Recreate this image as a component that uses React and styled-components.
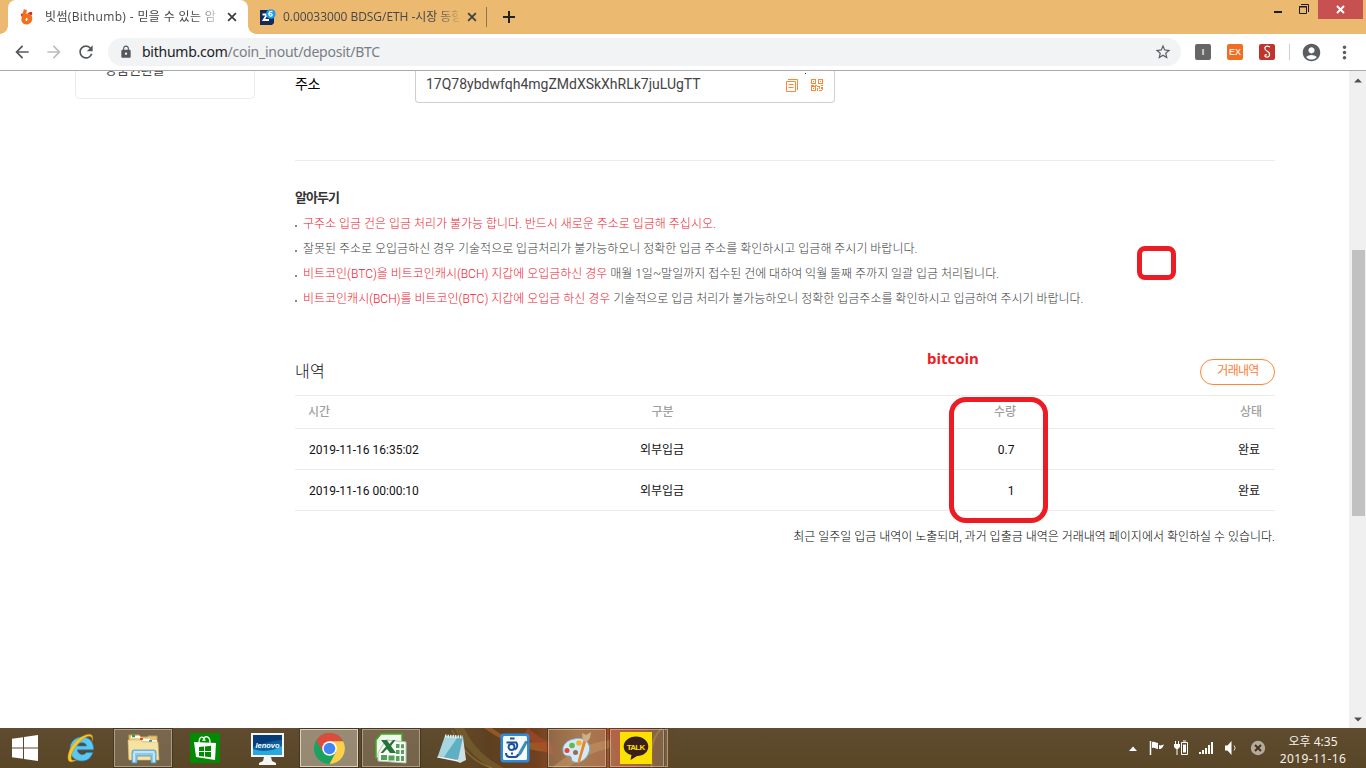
import React from "react";
import styled, { createGlobalStyle, css } from "styled-components";
import { MdArrowBack, MdArrowForward, MdRefresh, MdLock, MdStarBorder, MdAccountCircle, MdMoreVert } from "react-icons/md";

const GlobalStyle = createGlobalStyle`
  * { box-sizing: border-box; }
  body { margin: 0; overflow: hidden; }
  svg { display: block; flex: none; }
`;

const uiFont = `"Noto Sans", "Noto Sans CJK KR", sans-serif`;
const pageFont = `Roboto, "Noto Sans CJK KR", sans-serif`;

const Screen = styled.div`
  position: relative;
  width: 1366px;
  height: 768px;
  display: flex;
  flex-direction: column;
  overflow: hidden;
  background: #fff;
  font-family: ${pageFont};
`;

/* ---------- window frame ---------- */
const TabStrip = styled.header`
  height: 34px;
  flex: none;
  display: flex;
  align-items: flex-start;
  padding-left: 8px;
  background: #ebba70;
  font-family: "Open Sans", "Noto Sans CJK KR", sans-serif;
`;
const Tab = styled.div`
  position: relative;
  width: 240px;
  height: 34px;
  padding: 0 11px 0 12px;
  display: flex;
  align-items: center;
  font-size: 12px;
  font-weight: 400;
  color: #45474b;
  ${(p) =>
    p.$active &&
    css`
      background: #fff;
      border-radius: 8px 8px 0 0;
      &::before,
      &::after {
        content: "";
        position: absolute;
        bottom: 0;
        width: 8px;
        height: 8px;
      }
      &::before {
        left: -8px;
        background: radial-gradient(circle at 0 0, transparent 7.5px, #fff 8px);
      }
      &::after {
        right: -8px;
        background: radial-gradient(circle at 100% 0, transparent 7.5px, #fff 8px);
      }
    `}
`;
const TabTitle = styled.span`
  flex: 1;
  margin-left: ${(p) => p.$gap}px;
  margin-right: 8px;
  line-height: 20px;
  white-space: nowrap;
  overflow: hidden;
  letter-spacing: ${(p) => p.$spacing}px;
  mask-image: linear-gradient(to right, #000 86%, transparent 103%);
`;
const TabDivider = styled.i`
  width: 1px;
  height: 20px;
  margin: 7px 16px 0 -2px;
  background: #8b7450;
`;
const NewTab = styled.div`
  height: 34px;
  display: flex;
  align-items: center;
`;
const WindowControls = styled.div`
  margin-left: auto;
  margin-right: 3px;
  display: flex;
  align-items: flex-start;
`;
const CloseButton = styled.div`
  width: 45px;
  height: 19px;
  margin-left: 9px;
  display: flex;
  align-items: center;
  justify-content: center;
  background: #c75050;
`;

const Toolbar = styled.div`
  height: 37px;
  flex: none;
  display: flex;
  align-items: center;
  padding: 0 11px 0 12px;
  border-bottom: 1px solid #a9a9ab;
  background: #fff;
  color: #5a5e63;
`;
const NavButton = styled.span`
  width: 32px;
  display: flex;
  color: ${(p) => (p.$disabled ? "#bbbdc0" : "#54585d")};
`;
const Omnibox = styled.div`
  width: 1073px;
  height: 28px;
  margin-right: 14px;
  border-radius: 14px;
  padding: 0 9px 0 11px;
  display: flex;
  align-items: center;
  background: #f1f3f4;
  font: 14px/20px ${uiFont};
`;
const Url = styled.span`
  flex: 1;
  margin-left: 9px;
  color: #7a7e83;
  white-space: nowrap;
  letter-spacing: -0.25px;
  b { color: #202124; font-weight: 400; }
`;
const Extension = styled.span`
  width: 16px;
  height: 16px;
  margin-right: 16px;
  border-radius: 2px;
  display: flex;
  align-items: center;
  justify-content: center;
  background: ${(p) => p.$bg};
  color: #f3e7df;
  font: 700 9px/16px "Liberation Sans", sans-serif;
`;
const ToolbarDivider = styled.i`
  width: 1px;
  height: 16px;
  margin: 0 11px 0 -2px;
  background: #cdcfd1;
`;
const MenuDots = styled.span`
  margin-left: 12px;
`;

/* ---------- web page ---------- */
const Viewport = styled.main`
  flex: 1;
  min-height: 0;
  display: flex;
  overflow: hidden;
`;
const Page = styled.div`
  width: 1349px;
  padding-left: 75px;
  display: flex;
  align-items: flex-start;
`;
const SideCard = styled.aside`
  width: 180px;
  height: 28px;
  margin-right: 40px;
  padding-left: 29px;
  border: 1px solid #ebebeb;
  border-top: 0;
  border-radius: 0 0 5px 5px;
  overflow: hidden;
  font-size: 13px;
  line-height: 20px;
  color: #444;
  span { display: block; margin-top: -11px; }
`;
const Content = styled.section`
  width: 980px;
`;
const AddressRow = styled.div`
  height: 90px;
  display: flex;
  align-items: flex-start;
  border-bottom: 1px solid #ededed;
`;
const FieldLabel = styled.label`
  width: 120px;
  padding-top: 3px;
  font-size: 14px;
  line-height: 20px;
  letter-spacing: -0.3px;
  color: #000;
`;
const AddressBox = styled.div`
  width: 420px;
  height: 32px;
  padding: 0 10px 3px;
  display: flex;
  align-items: center;
  gap: 12px;
  border: 1px solid #cfcfcf;
  border-top: 0;
  border-radius: 0 0 4px 4px;
  font-size: 14px;
  color: #444;
  span { flex: 1; padding-bottom: 2px; }
`;
const NoticeTitle = styled.h4`
  margin: 26px 0 3px;
  font-size: 13px;
  line-height: 22px;
  font-weight: 700;
  letter-spacing: -1px;
  color: #333;
`;
const NoticeList = styled.ul`
  margin: 0;
  padding: 0;
  list-style: none;
`;
const NoticeItem = styled.li`
  display: flex;
  align-items: center;
  height: 25px;
  font-size: 12px;
  font-weight: 300;
  line-height: 25px;
  letter-spacing: -0.01px;
  color: #3c3c3c;
  white-space: pre;
  &::before {
    content: "";
    width: 2px;
    height: 2px;
    margin: 3px 6px 0 0;
    background: #888;
  }
  em { font-style: normal; color: #f0202f; }
`;
const HistoryHeader = styled.div`
  height: 84px;
  padding-bottom: 10px;
  display: flex;
  justify-content: space-between;
  align-items: flex-end;
  border-bottom: 1px solid #ebebeb;
`;
const HistoryTitle = styled.h3`
  margin: 0;
  font-size: 16px;
  line-height: 26px;
  font-weight: 300;
  color: #111;
  letter-spacing: 0.3px;
`;
const PillButton = styled.button`
  width: 75px;
  height: 26px;
  padding: 0 0 2px 1px;
  border: 1px solid #ff8633;
  border-radius: 13px;
  background: #fff;
  color: #ff7a2f;
  font: 12px/20px ${pageFont};
  letter-spacing: -0.7px;
`;
const Row = styled.div`
  height: ${(p) => (p.$head ? 33 : 41)}px;
  padding: ${(p) => (p.$head ? "0 13px" : "2px 15px 0 14px")};
  display: grid;
  grid-template-columns: ${(p) => (p.$head ? "232px 245px 231px 1fr" : "231px 244px 230.5px 1fr")};
  align-items: center;
  border-bottom: 1px solid #ebebeb;
  font-size: 12px;
  line-height: 18px;
  font-weight: ${(p) => (p.$head ? 500 : 400)};
  color: ${(p) => (p.$head ? "#a0a0a0" : "#111")};
`;
const Cell = styled.span`
  text-align: ${(p) => p.$align || "left"};
`;
const FootNote = styled.p`
  margin: 16px 0 0;
  text-align: right;
  font-size: 12px;
  line-height: 20px;
  font-weight: 300;
  color: #000;
`;
const ScrollTrack = styled.div`
  width: 17px;
  display: flex;
  flex-direction: column;
  align-items: center;
  padding: 7px 0 6px;
  background: #f0f0f0;
`;
const ScrollThumb = styled.div`
  width: 13px;
  height: 266px;
  margin: 167px 0 auto 2px;
  background: #c1c1c1;
`;

/* ---------- pen marks over the page ---------- */
const MarkBox = styled.div`
  position: absolute;
  left: ${(p) => p.$x}px;
  top: ${(p) => p.$y}px;
  width: ${(p) => p.$w}px;
  height: ${(p) => p.$h}px;
  border: ${(p) => p.$line}px solid #ed1c24;
  border-radius: ${(p) => p.$r}px;
`;
const MarkText = styled.div`
  position: absolute;
  left: 927px;
  top: 348px;
  font: 700 15px/20px ${uiFont};
  color: #ed1c24;
`;
const Speck = styled.i`
  position: absolute;
  left: 805px;
  top: 73px;
  width: 1px;
  height: 1px;
  background: #222;
`;

/* ---------- taskbar ---------- */
const Taskbar = styled.footer`
  position: relative;
  z-index: 0;
  height: 40px;
  flex: none;
  display: flex;
  align-items: center;
  gap: 4px;
  background: linear-gradient(#5f4b2f, #594627);
`;
const FlameArt = styled.svg`
  position: absolute;
  left: 440px;
  top: 0;
  z-index: -1;
`;
const TaskSlot = styled.div`
  width: ${(p) => p.$w || 58}px;
  height: 38px;
  padding-left: ${(p) => p.$indent || 0}px;
  padding-right: ${(p) => p.$shift || 0}px;
  display: flex;
  align-items: center;
  justify-content: center;
  ${(p) =>
    p.$open &&
    css`
      border: 1px solid rgba(222, 213, 198, ${p.$focus ? 0.95 : 0.5});
      background: rgba(225, 218, 205, ${p.$focus ? 0.45 : 0.2});
      box-shadow: 0 0 0 1px rgba(40, 28, 12, 0.4);
    `}
`;
const StackEdge = styled.i`
  width: 4px;
  height: 38px;
  margin-left: -4px;
  border: 1px solid rgba(222, 205, 180, 0.5);
  border-left: 0;
  background: rgba(225, 190, 150, 0.2);
`;
const Tray = styled.div`
  margin-left: auto;
  display: flex;
  align-items: center;
  padding-right: 20px;
`;
const TrayIcon = styled.span`
  display: flex;
  margin-right: ${(p) => p.$gap}px;
`;
const Clock = styled.div`
  width: 66px;
  padding-top: 3px;
  display: flex;
  flex-direction: column;
  align-items: center;
  white-space: nowrap;
  font: 12px/17px ${uiFont};
  color: #f5f2ec;
  div + div { letter-spacing: 0.4px; }
`;

const Cross = ({ color = "#3c4043", size = 9, w = 1.7 }) => (
  <svg width={size} height={size} viewBox="0 0 9 9">
    <path d="M1 1l7 7M8 1l-7 7" stroke={color} strokeWidth={w} />
  </svg>
);

const BithumbIcon = () => (
  <svg width="14" height="16" viewBox="0 0 14 16">
    <path d="M7.500 4.800c1.400-1.600 3.600-2.200 4.600-1.200.6.900-.1 2.400-1.300 3.500zM1 5l2.500-1-.5 5C1.400 7.600.5 6.200 1 5z" fill="#d92b26" />
    <path d="M3.800.3l3.100.6-.7 4.100C10 4.100 12.400 6.300 12.300 9.500c-.1 3.700-2.700 6-6 6-3.200 0-5.300-2.300-4.900-5.900z" fill="#f37021" />
    <ellipse cx="6.600" cy="10.500" rx=".9" ry="1.600" fill="#fff" transform="rotate(12 6.600 10.500)" />
  </svg>
);
const ExchangeIcon = () => (
  <svg width="16" height="16" viewBox="0 0 16 16">
    <path d="M0 1h10l4 6v7l-2 2H0z" fill="#182958" />
    <path d="M2.500 5.500H7L3.500 11H9" fill="none" stroke="#fff" strokeWidth="1.800" />
    <circle cx="10.800" cy="5" r="4.800" fill="#159bf0" />
    <path d="M12.500 2.600c-3-.8-4 1-3.500 3.300.5 1.900 3.300 1.500 3.200-.1-.1-1.500-2.200-1.700-3-.5" fill="none" stroke="#fff" strokeWidth="1.200" />
  </svg>
);

const CopyIcon = () => (
  <svg width="13" height="13" viewBox="0 0 13 13" fill="none" stroke="#ff8633">
    <path d="M.5 2.500h9v10h-9zM2 .5h9.500V11M2.500 5.500h5M2.500 8.500h5" />
  </svg>
);
const QrIcon = () => (
  <svg width="13" height="13" viewBox="0 0 13 13" shapeRendering="crispEdges">
    <path d="M.5 .5h4v4h-4zM7.500 .5h4v4h-4zM.5 7.500h4v4h-4z" fill="none" stroke="#ff8633" />
    <path d="M2 2h1v1H2zM9 2h1v1H9zM2 9h1v1H2zM0 6h3v1H0zM4 6h2v1H4zM6 7h3v1H6zM10 6h2v1h-2zM8 8h1v2H8zM10 8h2v2h-2zM6 9h1v3H6zM8 11h3v1H8zM11 10h1v1h-1z" fill="#ff8633" />
  </svg>
);

const WindowsLogo = () => (
  <svg width="27" height="26" viewBox="0 0 27 26" fill="#fff">
    <path d="M0 3.700l11-1.500v10.300H0zM12 2l14-2v12.500H12zM0 13.500h11v10.300L0 22.300zM12 13.500h14V26l-14-2z" />
  </svg>
);
const IeLogo = () => (
  <svg width="31" height="32" viewBox="0 0 31 32">
    <path d="M27.500 17.800H11.300c.4 5 6.500 6.500 9 2.800h6.500C25 26 21.500 29 15.800 29 8.500 29 4 24 4 17.200 4 10 9 5 16 5c7.500 0 12 5.300 11.500 12.800zM11.400 14h9.200c-.5-4.500-8.500-4.500-9.200 0z" fill="#5cc8f2" stroke="#1b87c9" strokeWidth=".7" />
    <path d="M26 9.500C30-1.500 18 1 9.500 9.500 2 17 .2 27.500 3.500 29.500c1.800 1 4.700.1 8-2.300-3 1.300-5.300 1.500-6 0C4 23 9 14 15.500 8.300 21 3.500 27.200 1.900 26 9.500z" fill="#f3c72e" stroke="#b9850e" strokeWidth=".5" />
  </svg>
);
const ExplorerIcon = () => (
  <svg width="33" height="32" viewBox="0 0 33 32">
    <path d="M2 3h10l2 2h7V4h9v23H2z" fill="#e6c777" stroke="#c9a34e" />
    <path d="M4 5h9M15 8h8M22 9.500h8" stroke="#fff" strokeWidth="2.500" />
    <path d="M5 4h3" stroke="#18a64a" strokeWidth="2.500" /><path d="M13 7h3" stroke="#e24a3b" strokeWidth="2" /><path d="M22 9h3" stroke="#3a8be0" strokeWidth="2" />
    <path d="M1 8h12l2 2h16l1 18H2z" fill="#f6e3a1" stroke="#d8b866" strokeWidth=".6" />
    <path d="M5 31V20q0-2 2-2h20q2 0 2 2v11h-5v-7H10v7z" fill="#8fc8ea" stroke="#4e97c4" strokeWidth=".8" />
    <path d="M7 20h20M7 21v9M27 21v9" stroke="#d4effc" strokeWidth="1.500" />
  </svg>
);
const StoreIcon = () => (
  <svg width="30" height="30" viewBox="0 0 30 30">
    <path fill="#038a03" d="M0 0h30v30H0z" />
    <path d="M9 10c0-8 5-7 6-2M13 8c1-6 7-6 7 2" stroke="#e7f6e7" strokeWidth="1.400" fill="none" />
    <path d="M4 9l22 1-1 17-19-3z" fill="#fff" />
    <path d="M9 14l5-.500v4.500H9zM15 13.400l6-.600V18h-6zM9 19h5v4.500L9 23zM15 19h6v5.200l-6-.600z" fill="#038a03" />
  </svg>
);
const LenovoIcon = () => (
  <svg width="33" height="33" viewBox="0 0 33 33">
    <path d="M0 1h33v24H20l1 4 4 2v2H8v-2l4-2 1-4H0z" fill="#f3f5f6" />
    <path d="M2 3h29v20H2z" fill="#0c5e9d" /><path d="M2 17q14 5 29-3v9H2z" fill="#28a8dd" /><path d="M2 3h29v5Q17 9 2 15z" fill="#063c78" />
    <text x="16.500" y="15.500" textAnchor="middle" fontFamily="Liberation Sans, sans-serif" fontWeight="700" fontStyle="italic" fontSize="7.500" fill="#fff">lenovo</text>
  </svg>
);
const ChromeLogo = () => (
  <svg width="31" height="31" viewBox="0 0 32 32">
    <circle cx="16" cy="16" r="16" fill="#1aa260" />
    <path d="M16 16L2.140 8A16 16 0 0 1 29.860 8z" fill="#dd4b3e" />
    <path d="M16 8.500h14.100A16 16 0 0 1 16 32l6.500-12.200z" fill="#fdd04c" />
    <path d="M9.500 19.800L2.600 8l7.400-1 6 3z" fill="#dd4b3e" />
    <circle cx="16" cy="16" r="7.500" fill="#fff" /><circle cx="16" cy="16" r="6" fill="#4285f4" />
  </svg>
);
const ExcelIcon = () => (
  <svg width="32" height="31" viewBox="0 0 32 31">
    <path d="M6 1h21v24H1V7z" fill="#eef8eb" stroke="#3eae20" strokeWidth="1.500" />
    <path d="M11 7l20 2v21l-28-2v-8z" fill="#f7faf5" stroke="#b6c7b4" />
    <path d="M21 11h3.500v4H21zM26 11.300h3v4h-3zM21 17h3.500v4H21zM26 17h3v4h-3zM6 22h6v5H6zM13.500 22.500h6v5h-6zM21 23h3.500v5H21zM26 23h3v5h-3z" fill="#55a05a" />
    <path d="M6 7h6l2.500 4L18 7h2.500l-4.500 6 5 7h-6l-3-4-4 4H5.500l5.500-6.500z" fill="#277238" />
  </svg>
);
const NotepadIcon = () => (
  <svg width="32" height="31" viewBox="0 0 32 31">
    <path d="M24 4h3l3 23-6 3-4-2z" fill="#cfe0e4" />
    <path d="M9 3l18 1-5 23-20-4z" fill="#5fb0c4" /><path d="M9 3l13 .7L8 24l-6-1z" fill="#c4e8ec" opacity=".7" />
    <path d="M2 23l20 4-1 1.500L1 24.500z" fill="#eef6f7" />
    <path d="M9 3l18 1" stroke="#e8eeef" strokeWidth="3" strokeDasharray="1.500 1" />
  </svg>
);
const HangulIcon = () => (
  <svg width="30" height="30" viewBox="0 0 30 30" fill="none">
    <rect x=".5" y=".5" width="29" height="29" rx="3" fill="#2a8cda" /><rect x="3" y="3" width="24" height="24" rx="1.500" fill="#f3f9fc" />
    <path d="M10 5.500h4.500M6.500 9.500h10.500M16 9c2 3 1.500 6.500-1.500 7.500" stroke="#1c4f9a" strokeWidth="1.900" /><circle cx="11.500" cy="14" r="3" stroke="#1c4f9a" strokeWidth="1.900" />
    <path d="M6 20q0 4 4 4h5q3 0 3-3M11 20.500h2" stroke="#1c4f9a" strokeWidth="2" /><path d="M27.500 9l-6.500 12-2.500 2 .3-3.300L25.500 8z" fill="#3b8fb8" stroke="#1e5f8c" strokeWidth=".5" />
  </svg>
);
const PaintIcon = () => (
  <svg width="33" height="32" viewBox="0 0 33 32">
    <path d="M14 7C24 4 32 12 29 20c-2 7-9 12-15 10-4-1-1-6-5-6-3 0-6-1-6-5C2 13 7 8 14 7z" fill="#d4e9f5" stroke="#75afd1" />
    <circle cx="7" cy="18.500" r="2.500" fill="#e2453d" /><circle cx="12" cy="13.500" r="2.800" fill="#62b947" /><circle cx="19" cy="11" r="2.800" fill="#f3b52c" /><circle cx="15.500" cy="20.500" r="2.500" fill="#8d6e63" />
    <path d="M27 7l-7 23-2 2v-4l6-22z" fill="#e7842d" /><path d="M22 1l4 2 5-3-1 6-3 4-4-1z" fill="#cdb084" />
  </svg>
);
const TalkIcon = () => (
  <svg width="32" height="32" viewBox="0 0 32 32">
    <path fill="#fae100" d="M0 0h32v32H0z" />
    <path d="M16 4.500c7 0 12.300 4.500 12.300 10S23.500 24 17 24l-6.500 4 1-5C7 22 3.700 19 3.700 14.500c0-5.500 5.300-10 12.300-10z" fill="#3b1e1e" />
    <text x="16" y="17.800" textAnchor="middle" textLength="18.500" fontFamily="Liberation Sans, sans-serif" fontWeight="700" fontSize="8" fill="#fae100">TALK</text>
  </svg>
);

const Flames = () => (
  <FlameArt width="240" height="40" viewBox="0 0 240 40" fill="none">
    <defs>
      <linearGradient id="flame" x1="0" x2="1" y1="0" y2="0">
        <stop offset="0" stopColor="#6d4a22" stopOpacity="0" />
        <stop offset=".2" stopColor="#5d4020" />
        <stop offset=".4" stopColor="#70401f" />
        <stop offset=".58" stopColor="#9a6132" />
        <stop offset=".78" stopColor="#9c4a26" />
        <stop offset=".9" stopColor="#6f4422" />
        <stop offset="1" stopColor="#5c482b" stopOpacity="0" />
      </linearGradient>
    </defs>
    <path d="M0 0h240v40H0z" fill="url(#flame)" />
    <path d="M14 0q10 22 36 40h14Q36 26 24 0z" fill="#7d6530" opacity=".6" />
    <path d="M12 2q14 30 40 38" stroke="#a98b45" strokeWidth="1.500" opacity=".5" />
    <path d="M52 0q22 18 56 14v10Q74 22 44 0z" fill="#b4692a" opacity=".6" />
    <path d="M88 0q14 12 22 14l4 14Q98 22 84 6z" fill="#ad4a28" opacity=".6" />
    <path d="M112 40q26-24 58-28v8q-26 6-42 20z" fill="#c08a4c" opacity=".5" />
    <path d="M160 0h50q-14 14-12 40h-24q6-26-14-40z" fill="#b13c20" opacity=".5" />
    <path d="M222 0q-14 12-10 40" stroke="#a07a34" strokeWidth="2" opacity=".6" />
  </FlameArt>
);

const tasks = [
  { Icon: IeLogo },
  { Icon: ExplorerIcon, open: true },
  { Icon: StoreIcon },
  { Icon: LenovoIcon },
  { Icon: ChromeLogo, open: true, focus: true },
  { Icon: ExcelIcon, open: true },
  { Icon: NotepadIcon, shift: 3 },
  { Icon: HangulIcon },
  { Icon: PaintIcon, open: true, shift: 2 },
  { Icon: TalkIcon, open: true, w: 54, shift: 2 },
];

const deposits = [
  ["2019-11-16 16:35:02", "외부입금", "0.7", "완료"],
  ["2019-11-16 00:00:10", "외부입금", "1", "완료"],
];
const aligns = ["left", "center", "right", "right"];

const TableRow = ({ cells, head }) => (
  <Row $head={head}>
    {cells.map((c, i) => <Cell key={i} $align={aligns[i]}>{c}</Cell>)}
  </Row>
);

export default function App() {
  return (
    <Screen>
      <GlobalStyle />
      <TabStrip>
        <Tab $active>
          <BithumbIcon />
          <TabTitle $gap={11} $spacing={0.35}>빗썸(Bithumb) - 믿을 수 있는 암</TabTitle>
          <Cross size={10} w={1.6} />
        </Tab>
        <Tab>
          <ExchangeIcon />
          <TabTitle $gap={7} $spacing={-0.05}>0.00033000 BDSG/ETH -시장 동향</TabTitle>
          <Cross size={10} w={1.6} />
        </Tab>
        <TabDivider />
        <NewTab>
          <svg width="12" height="12" viewBox="0 0 12 12"><path d="M6 0v12M0 6h12" stroke="#222" strokeWidth="2" /></svg>
        </NewTab>
        <WindowControls>
          <svg width="35" height="15" viewBox="0 0 35 15" fill="none" stroke="#1c1c1c">
            <path d="M0 12h8" strokeWidth="2" /><path d="M25.500 6.500h7v7h-7z" /><path d="M25 7h8" /><path d="M27 4.500h7.500V12" />
          </svg>
          <CloseButton><Cross color="#fff" size={9} w={2} /></CloseButton>
        </WindowControls>
      </TabStrip>

      <Toolbar>
        <NavButton><MdArrowBack size={20} /></NavButton>
        <NavButton $disabled><MdArrowForward size={20} /></NavButton>
        <NavButton><MdRefresh size={20} /></NavButton>
        <Omnibox>
          <MdLock size={14} color="#54585d" />
          <Url><b>bithumb.com</b>/coin_inout/deposit/BTC</Url>
          <MdStarBorder size={18} />
        </Omnibox>
        <Extension $bg="#666">I</Extension>
        <Extension $bg="#f26c22">EX</Extension>
        <Extension $bg="#c0342b">
          <svg width="10" height="14" viewBox="0 0 10 14"><path d="M8 2C3-1 1 4 5 6c4 2 3 7-1 6-2-1-1-3 1-2" fill="none" stroke="#fff" strokeWidth="1.200" /></svg>
        </Extension>
        <ToolbarDivider />
        <MdAccountCircle size={21} />
        <MenuDots><MdMoreVert size={21} /></MenuDots>
      </Toolbar>

      <Viewport>
        <Page>
          <SideCard><span>상품권환불</span></SideCard>
          <Content>
            <AddressRow>
              <FieldLabel>주소</FieldLabel>
              <AddressBox>
                <span>17Q78ybdwfqh4mgZMdXSkXhRLk7juLUgTT</span>
                <CopyIcon />
                <QrIcon />
              </AddressBox>
            </AddressRow>
            <NoticeTitle>알아두기</NoticeTitle>
            <NoticeList>
              <NoticeItem><em>구주소 입금 건은 입금 처리가 불가능 합니다. 반드시 새로운 주소로 입금해 주십시오.</em></NoticeItem>
              <NoticeItem>잘못된 주소로 오입금하신 경우 기술적으로 입금처리가 불가능하오니 정확한 입금 주소를 확인하시고 입금해 주시기 바랍니다.</NoticeItem>
              <NoticeItem><em>비트코인(BTC)을 비트코인캐시(BCH) 지갑에 오입금하신 경우</em> 매월 1일~말일까지 접수된 건에 대하여 익월 둘째 주까지 일괄 입금 처리됩니다.</NoticeItem>
              <NoticeItem><em>비트코인캐시(BCH)를 비트코인(BTC) 지갑에 오입금 하신 경우</em> 기술적으로 입금 처리가 불가능하오니 정확한 입금주소를 확인하시고 입금하여 주시기 바랍니다.</NoticeItem>
            </NoticeList>
            <HistoryHeader>
              <HistoryTitle>내역</HistoryTitle>
              <PillButton>거래내역</PillButton>
            </HistoryHeader>
            <TableRow head cells={["시간", "구분", "수량", "상태"]} />
            {deposits.map((d) => <TableRow key={d[0]} cells={d} />)}
            <FootNote>최근 일주일 입금 내역이 노출되며, 과거 입출금 내역은 거래내역 페이지에서 확인하실 수 있습니다.</FootNote>
          </Content>
        </Page>
        <ScrollTrack>
          <svg width="8" height="5" viewBox="0 0 8 5"><path d="M0 4.500L4 .500l4 4z" fill="#505050" /></svg>
          <ScrollThumb />
          <svg width="8" height="5" viewBox="0 0 8 5"><path d="M0 .500l4 4 4-4z" fill="#505050" /></svg>
        </ScrollTrack>
      </Viewport>

      <Taskbar>
        <Flames />
        <TaskSlot $w={48} $indent={3}><WindowsLogo /></TaskSlot>
        {tasks.map(({ Icon, open, focus, w, shift }, i) => (
          <TaskSlot key={i} $open={open} $focus={focus} $w={w} $shift={shift}><Icon /></TaskSlot>
        ))}
        <StackEdge />
        <Tray>
          <TrayIcon $gap={12}><svg width="8" height="5" viewBox="0 0 8 5"><path d="M0 5l4-4.500L8 5z" fill="#fff" /></svg></TrayIcon>
          <TrayIcon $gap={9}>
            <svg width="16" height="16" viewBox="0 0 16 16"><path d="M1.500 1v14" stroke="#fff" strokeWidth="1.500" /><path d="M3 2c3-1 4 1 6 1v6C7 9 6 7 3 8zM10 5c2 1 3 0 5-.500-1 2-2 5-5 4.500z" fill="#fff" /></svg>
          </TrayIcon>
          <TrayIcon $gap={9}>
            <svg width="16" height="16" viewBox="0 0 16 16" fill="none" stroke="#fff"><path d="M7.500 2.500h6v12h-6zM9 1h3" /><path d="M9 4.500h3v8H9z" fill="#fff" stroke="none" /><path d="M1.500 1v4M4.500 1v4M3 8v7" /><path d="M0 4h6v3L4 9H2L0 7z" fill="#fff" stroke="none" /></svg>
          </TrayIcon>
          <TrayIcon $gap={10}>
            <svg width="16" height="14" viewBox="0 0 16 14" fill="#fff"><path d="M0 11h2v2H0zM3 9h2v4H3zM6 7h2v6H6zM9 4h2v9H9zM12 1h2v12h-2z" /></svg>
          </TrayIcon>
          <TrayIcon $gap={11}>
            <svg width="14" height="14" viewBox="0 0 14 14"><path d="M0 4.500h2.500l4-4.500v14l-4-4.500H0z" fill="#fff" /><path d="M9 4.500q2.500 2.500 0 5" stroke="#ddd" fill="none" /></svg>
          </TrayIcon>
          <TrayIcon $gap={14}>
            <svg width="16" height="16" viewBox="0 0 16 16"><circle cx="8" cy="8" r="7.200" fill="#b5aa9c" /><path d="M5 5l6 6M11 5l-6 6" stroke="#44341c" strokeWidth="2" /></svg>
          </TrayIcon>
          <Clock><div>오후 4:35</div><div>2019-11-16</div></Clock>
        </Tray>
      </Taskbar>

      <Speck />
      <MarkBox $x={1137} $y={246} $w={39} $h={34} $line={5} $r={8} />
      <MarkBox $x={949} $y={397} $w={99} $h={126} $line={5} $r={17} />
      <MarkText>bitcoin</MarkText>
    </Screen>
  );
}
